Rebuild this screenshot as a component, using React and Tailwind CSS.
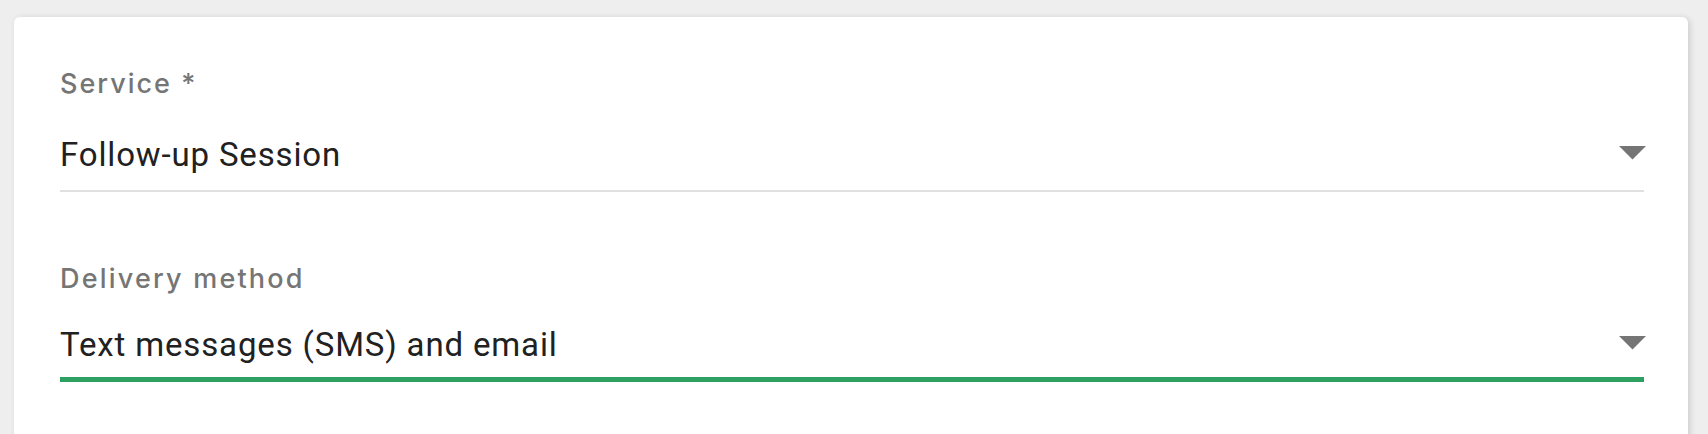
import React from "react";

function Arrow() {
  return (
    <svg width="27" height="14" viewBox="0 0 27 14" className="shrink-0 -mr-[2px]">
      <polygon points="0,0 27,0 13.5,13.5" fill="#757575" />
    </svg>
  );
}

const labelFont = { fontFamily: "Inter, 'Open Sans', sans-serif" };
const valueFont = { fontFamily: "Roboto, 'Liberation Sans', sans-serif" };

export default function App() {
  return (
    <div className="h-[434px] w-[1708px] overflow-hidden bg-[#eeeeee] pt-[17px] pl-[14px] pr-[20px]">
      <div className="h-[480px] rounded-[6px] bg-white pl-[46px] pr-[44px] pt-[52px] shadow-[2px_1px_6px_rgba(0,0,0,0.14)]">
        {/* Service */}
        <div
          className="h-[30px] text-[27px] font-medium leading-[30px] tracking-[2px] text-[#757575]"
          style={labelFont}
        >
          Service *
        </div>
        <div className="mt-[36px] flex h-[40px] items-center">
          <div
            className="flex-1 text-[33px] leading-[40px] tracking-[0.85px] text-[#212121]"
            style={valueFont}
          >
            Follow-up Session
          </div>
          <div className="-mt-[4px]">
            <Arrow />
          </div>
        </div>
        <div className="mt-[15px] h-[2px] bg-[#e0e0e0]" />

        {/* Delivery method */}
        <div
          className="mt-[72px] h-[30px] text-[27px] font-medium leading-[30px] tracking-[2.2px] text-[#757575]"
          style={labelFont}
        >
          Delivery method
        </div>
        <div className="mt-[31px] flex h-[40px] items-center">
          <div
            className="flex-1 text-[33px] leading-[40px] tracking-[0.85px] text-[#212121]"
            style={valueFont}
          >
            Text messages (SMS) and email
          </div>
          <div className="-mt-[4px]">
            <Arrow />
          </div>
        </div>
        <div className="mt-[12px] h-[5px] bg-[#2ea062]" />
      </div>
    </div>
  );
}
